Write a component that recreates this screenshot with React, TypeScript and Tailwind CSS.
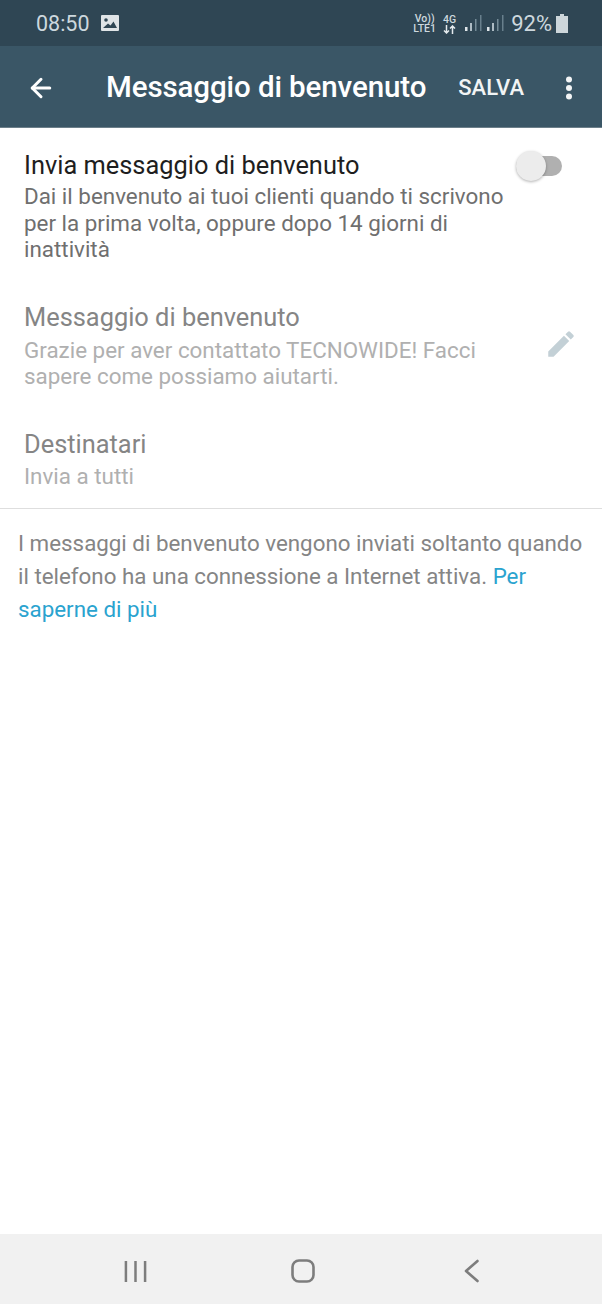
import { ArrowLeft } from 'lucide-react'

function SignalBars() {
  return (
    <svg width="17" height="18" viewBox="0 0 17 18" className="block">
      <rect x="0" y="13" width="2.5" height="4" fill="#dfe6ea" />
      <rect x="5" y="9" width="2" height="8" fill="#aebcc4" />
      <rect x="10" y="5" width="1.5" height="12" fill="#758b97" />
      <rect x="15" y="1" width="1.5" height="16" fill="#687f8c" />
    </svg>
  )
}

function StatusBar() {
  return (
    <div className="h-[46px] bg-[#2f4654] flex items-center pl-[36px] pr-[34px] pt-[2px] text-[#cdd8de]">
      <span className="text-[21.5px] leading-none">08:50</span>
      <svg width="18" height="16" viewBox="0 0 18 16" className="ml-[11px] mb-[2px]">
        <rect width="18" height="16" rx="1" fill="#dfe4e7" />
        <circle cx="5" cy="5" r="1.8" fill="#2f4654" />
        <path d="M2 13 L7 8.5 L9.5 10.5 L12.5 6.5 L16 13 Z" fill="#2f4654" />
      </svg>
      <div className="ml-auto flex items-center">
        <div className="flex flex-col items-center text-[10.5px] font-medium leading-[10px]">
          <span>Vo))</span>
          <span>LTE1</span>
        </div>
        <div className="flex flex-col items-center ml-[7px] text-[10.5px] font-medium leading-[10px]">
          <span>4G</span>
          <svg width="13" height="9" viewBox="0 0 13 9">
            <path d="M3.5 0V8M1 5.5L3.5 8L6 5.5M9.5 9V1M7 3.5L9.5 1L12 3.5" stroke="#e4eaed" strokeWidth="1.5" fill="none" />
          </svg>
        </div>
        <div className="flex items-center gap-[5px] ml-[9px] mt-[-2px]">
          <SignalBars />
          <SignalBars />
        </div>
        <span className="text-[22px] leading-none ml-[7px]">92%</span>
        <svg width="12" height="19" viewBox="0 0 12 19" className="ml-[4px] mb-[2px]">
          <path d="M4 0H8V2H12V19H0V2H4Z" fill="#cdd6da" />
        </svg>
      </div>
    </div>
  )
}

function AppBar() {
  return (
    <div className="h-[82px] bg-[#3a5666] flex items-center pt-[2px] text-white border-b border-[#6c7f8a]">
      <ArrowLeft size={30} strokeWidth={2.4} className="ml-[26px]" />
      <span className="ml-[50px] text-[29.5px] font-medium leading-none whitespace-nowrap tracking-[-0.1px]">
        Messaggio di benvenuto
      </span>
      <span className="ml-[32px] text-[22px] font-medium leading-none text-[#f1f4f5]">SALVA</span>
      <svg width="8" height="24" viewBox="0 0 8 24" className="ml-[41px]" fill="#f3f5f6">
        <circle cx="4" cy="3.5" r="3" />
        <circle cx="4" cy="12" r="3" />
        <circle cx="4" cy="20.5" r="3" />
      </svg>
    </div>
  )
}

function NavBar() {
  return (
    <div className="h-[70px] bg-[#f1f1f1] flex items-center pl-[124px] pt-[4px]">
      <svg width="23" height="23" viewBox="0 0 24 24" stroke="#7d7d7d" strokeWidth="2.6">
        <path d="M2 1V23M12 1V23M22 1V23" />
      </svg>
      <svg width="24" height="24" viewBox="0 0 24 24" fill="none" stroke="#7d7d7d" strokeWidth="2.6" className="ml-[144px]">
        <rect x="1.5" y="1.5" width="21" height="21" rx="6.5" />
      </svg>
      <svg width="16" height="24" viewBox="0 0 16 24" fill="none" stroke="#7d7d7d" strokeWidth="2.6" strokeLinecap="round" strokeLinejoin="round" className="ml-[149px]">
        <path d="M13.5 2L2 12L13.5 22" />
      </svg>
    </div>
  )
}

export default function App() {
  return (
    <div className="w-[602px] h-[1304px] flex flex-col bg-white font-['Roboto',sans-serif]">
      <StatusBar />
      <AppBar />
      <div className="flex-1 min-h-0">
        <div className="px-[24px] border-b border-[#dedede] h-[381px] pt-[22px]">
          <div className="relative">
            <p className="text-[25.4px] leading-[30px] text-[#1e1e1e]">Invia messaggio di benvenuto</p>
            <p className="mt-[3px] text-[22.4px] leading-[26.5px] text-[#6f6f6f] w-[490px]">
              Dai il benvenuto ai tuoi clienti quando ti scrivono per la prima volta, oppure dopo 14 giorni di inattività
            </p>
            <div className="absolute left-[492px] top-[6px] w-[46px] h-[20px] rounded-full bg-[#b0b0b0]">
              <div className="absolute left-0 top-[-5px] w-[30px] h-[30px] rounded-full bg-[#ececec] shadow-[0_1px_3px_rgba(0,0,0,0.3)]" />
            </div>
          </div>

          <div className="mt-[39px] relative">
            <p className="text-[25.4px] leading-[30px] text-[#858585]">Messaggio di benvenuto</p>
            <p className="mt-[5px] text-[22.4px] leading-[26px] text-[#b0b0b0] w-[490px]">
              Grazie per aver contattato TECNOWIDE! Facci sapere come possiamo aiutarti.
            </p>
            <svg width="34" height="34" viewBox="0 0 24 24" fill="#c3d0d6" className="absolute left-[520px] top-[25px]">
              <path d="M3 17.25V21h3.75L17.81 9.94l-3.75-3.75L3 17.25zM20.71 7.04a1 1 0 0 0 0-1.41l-2.34-2.34a1 1 0 0 0-1.41 0l-1.83 1.83 3.75 3.75 1.83-1.83z" />
            </svg>
          </div>

          <p className="mt-[40px] text-[25.4px] leading-[30px] text-[#858585]">Destinatari</p>
          <p className="mt-[4px] text-[22.4px] leading-[26.5px] text-[#b0b0b0]">Invia a tutti</p>
        </div>

        <p className="pl-[18px] pr-[16px] pt-[18px] text-[22.35px] leading-[33px] text-[#858585]">
          I messaggi di benvenuto vengono inviati soltanto quando il telefono ha una connessione a Internet attiva.{' '}
          <span className="text-[#2aa3cf]">Per saperne di più</span>
        </p>
      </div>
      <NavBar />
    </div>
  )
}
